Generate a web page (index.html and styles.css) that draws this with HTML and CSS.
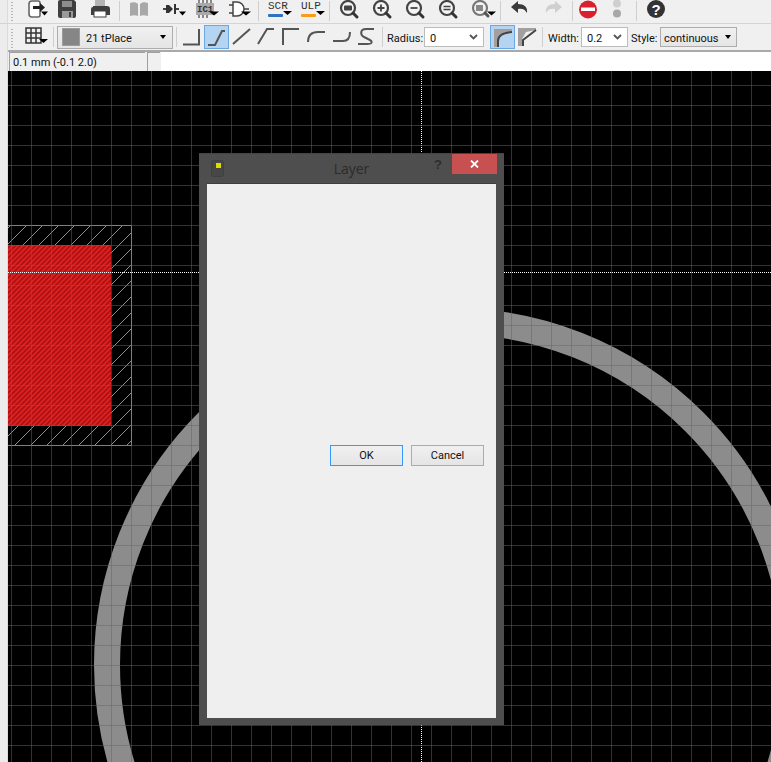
FILE: index.html
```html
<!DOCTYPE html>
<html lang="en">
<head>
  <meta charset="UTF-8">
  <title>Layer</title>
  <link rel="stylesheet" href="styles.css">
</head>
<body>
  <div class="toolbar row1">
    <span class="edge"></span>
    <span class="grip"></span>
    <svg class="tool" width="41" height="23" viewBox="13 0 41 23">
      <path d="M32 1h6a2 2 0 0 1 2 2v12a2 2 0 0 1-2 2h-6a3 3 0 0 1-3-3V4a3 3 0 0 1 3-3z" fill="#fff" stroke="#666" stroke-width="1.6"/>
      <path d="M33 6h7V3l5 4.5-5 4.5V9h-7z" fill="#222"/>
      <path d="M41 11.5h7l-3.5 4z" fill="#000"/>
    </svg>
    <svg class="tool" width="30" height="23" viewBox="54 0 30 23">
      <path d="M60 0h14l2 2v14a2 2 0 0 1-2 2H60a2 2 0 0 1-2-2V2a2 2 0 0 1 2-2z" fill="#3f3f3f"/>
      <rect x="62" y="1" width="10" height="6" fill="#8e8e8e"/>
      <rect x="62" y="11" width="11" height="7" fill="#9a9a9a"/>
      <rect x="69" y="12" width="2" height="5" fill="#3f3f3f"/>
    </svg>
    <svg class="tool" width="35" height="23" viewBox="84 0 35 23">
      <path d="M95 0h10v6H95z" fill="#b4b4b4"/>
      <path d="M93 6h14a3 3 0 0 1 3 3v6H91V9a2 2 0 0 1 2-2z" fill="#3f3f3f"/>
      <rect x="94" y="11" width="12" height="6" fill="#fff" stroke="#3f3f3f"/>
    </svg>
    <span class="sep"></span>
    <svg class="tool" width="35" height="23" viewBox="120 0 35 23">
      <path d="M130 3c3-1 6-1 8 1v12c-2-1-5-1-8 0zM148 3c-3-1-6-1-8 1v12c2-1 5-1 8 0z" fill="#a8a8a8"/>
    </svg>
    <svg class="tool" width="37" height="23" viewBox="155 0 37 23">
      <path d="M163 9h3M176 9h3" stroke="#444" stroke-width="2"/>
      <path d="M166 5h3l4 4-4 4h-3z M174 4h2v10h-2z" fill="#333"/>
      <path d="M179 11.5h7l-3.5 4z" fill="#000"/>
    </svg>
    <svg class="tool" width="32" height="23" viewBox="192 0 32 23">
      <path d="M199 0v3M203 0v3M207 0v3M211 0v3M199 15v3M203 15v3M207 15v3" stroke="#888" stroke-width="2"/>
      <rect x="196" y="3" width="18" height="12" fill="#a9a9a9"/>
      <text x="197" y="12" class="chip">IC1</text>
      <path d="M209 11.5h10l-5 4z" fill="#000"/>
    </svg>
    <svg class="tool" width="34" height="23" viewBox="224 0 34 23">
      <path d="M233 2h4a7 7 0 0 1 0 14h-4z" fill="#fff" stroke="#444" stroke-width="1.5"/>
      <path d="M229 5h4M229 13h4M244 9h5" stroke="#444" stroke-width="1.5"/>
      <path d="M241 11.5h10l-5 4z" fill="#000"/>
    </svg>
    <span class="sep"></span>
    <svg class="tool" width="37" height="23" viewBox="259 0 37 23">
      <text x="268" y="9" class="script">SCR</text>
      <rect x="268" y="14" width="15" height="3" rx="1" fill="#2c74bd"/>
      <path d="M283 11h9l-4.500 4z" fill="#000"/>
    </svg>
    <svg class="tool" width="33" height="23" viewBox="296 0 33 23">
      <text x="301" y="9" class="script">ULP</text>
      <rect x="301" y="14" width="15" height="3" rx="1" fill="#f99b1c"/>
      <path d="M316 11h9l-4.500 4z" fill="#000"/>
    </svg>
    <span class="sep"></span>
    <svg class="tool" width="36" height="23" viewBox="330 0 36 23">
      <circle cx="348" cy="8" r="7" class="lens"/>
      <path d="M353 13l4 4" class="handle"/>
      <rect x="344" y="5.500" width="8" height="5" rx="1" fill="#444"/>
    </svg>
    <svg class="tool" width="33" height="23" viewBox="366 0 33 23">
      <circle cx="381" cy="8" r="7" class="lens"/>
      <path d="M386 13l4 4" class="handle"/>
      <path d="M381 4.500v7M377.500 8h7" stroke="#444" stroke-width="1.800"/>
    </svg>
    <svg class="tool" width="33" height="23" viewBox="399 0 33 23">
      <circle cx="414" cy="8" r="7" class="lens"/>
      <path d="M419 13l4 4" class="handle"/>
      <path d="M410.500 8h7" stroke="#444" stroke-width="1.800"/>
    </svg>
    <svg class="tool" width="33" height="23" viewBox="432 0 33 23">
      <circle cx="447" cy="8" r="7" class="lens"/>
      <path d="M452 13l4 4" class="handle"/>
      <path d="M443.500 6.500h7M443.500 9.500h7" stroke="#444" stroke-width="1.500"/>
    </svg>
    <svg class="tool" width="35" height="23" viewBox="465 0 35 23">
      <circle cx="480" cy="8" r="7" class="lens soft"/>
      <path d="M485 13l3 3" class="handle soft"/>
      <rect x="476" y="5" width="7" height="6" fill="#888"/>
      <path d="M487 11.500h9l-4.500 4z" fill="#000"/>
    </svg>
    <span class="sep"></span>
    <svg class="tool" width="36" height="23" viewBox="501 0 36 23">
      <path d="M518 4V1l-7 6 7 6V9c4-1 7 0 9 4 1-6-3-9-9-9z" fill="#3a3a3a"/>
    </svg>
    <svg class="tool" width="35" height="23" viewBox="537 0 35 23">
      <path d="M555 4V1l7 6-7 6V9c-4-1-7 0-9 4-1-6 3-9 9-9z" fill="#cfcfcf"/>
    </svg>
    <span class="sep"></span>
    <svg class="tool" width="29" height="23" viewBox="573 0 29 23">
      <circle cx="588" cy="9.500" r="9" fill="#d9202f"/>
      <rect x="581" y="7.500" width="14" height="3.500" fill="#fff"/>
    </svg>
    <svg class="tool" width="34" height="23" viewBox="602 0 34 23">
      <circle cx="617" cy="3.500" r="4" fill="#cfcfcf"/>
      <circle cx="617" cy="13.500" r="4" fill="#a8a8a8"/>
    </svg>
    <span class="sep"></span>
    <svg class="tool" width="38" height="23" viewBox="637 0 38 23">
      <circle cx="656" cy="9" r="9" fill="#333"/>
      <text x="656" y="14.500" class="help">?</text>
    </svg>
  </div>

  <div class="toolbar row2">
    <span class="edge"></span>
    <span class="grip"></span>
    <svg class="tool" width="40" height="24" viewBox="13 26 40 24">
      <path d="M26 29h15v15H26zM26 34h15M26 39h15M31 29v15M36 29v15" fill="none" stroke="#333" stroke-width="1.500"/>
      <path d="M39 40h9l-4.500 4z" fill="#000"/>
    </svg>
    <span class="sep"></span>
    <div class="combo layer">
      <span class="swatch"></span>
      <span class="combo-text">21 tPlace</span>
      <span class="arrow"></span>
    </div>
    <span class="sep wide"></span>
    <svg class="tool" width="27" height="24" viewBox="177 26 27 24"><path d="M183 45.500H199V30" class="wire"/></svg>
    <svg class="tool on" width="25" height="24" viewBox="204 26 25 24"><path d="M208 46H215L222 32H225" class="wire"/></svg>
    <svg class="tool" width="25" height="24" viewBox="229 26 25 24"><path d="M233 45L250 30" class="wire"/></svg>
    <svg class="tool" width="25" height="24" viewBox="254 26 25 24"><path d="M258 45L267 30H274" class="wire"/></svg>
    <svg class="tool" width="25" height="24" viewBox="279 26 25 24"><path d="M283 46V30H299" class="wire"/></svg>
    <svg class="tool" width="25" height="24" viewBox="304 26 25 24"><path d="M308 43Q308 33 318 33H325" class="wire"/></svg>
    <svg class="tool" width="25" height="24" viewBox="329 26 25 24"><path d="M333 42H343Q350 42 350 33" class="wire"/></svg>
    <svg class="tool" width="28" height="24" viewBox="354 26 28 24"><path d="M374 30H366C360 30 360 36 364 38L368 40C373 42 373 45 367 45H358" class="wire"/></svg>
    <span class="sep"></span>
    <span class="label radius">Radius:</span>
    <div class="combo field radius-box">
      <span class="combo-text">0</span>
      <svg class="chevron" width="9" height="6" viewBox="0 0 9 6"><path d="M1 1l3.500 3.500L8 1" fill="none" stroke="#555" stroke-width="1.800"/></svg>
    </div>
    <svg class="tool on toggle" width="25" height="24" viewBox="490 26 25 24">
      <path d="M494 30H512V33Q497 33 497 48H494z" fill="#a39f9f"/>
      <path d="M498 48V42Q498 34 512 33" fill="none" stroke="#444" stroke-width="2"/>
    </svg>
    <svg class="tool" width="27" height="24" viewBox="515 26 27 24">
      <path d="M518 29H536V31L526 33L522 40V47H518z" fill="#a39f9f"/>
      <path d="M523 47V41L536 31" fill="none" stroke="#444" stroke-width="2"/>
    </svg>
    <span class="sep"></span>
    <span class="label width">Width:</span>
    <div class="combo field width-box">
      <span class="combo-text">0.2</span>
      <svg class="chevron" width="9" height="6" viewBox="0 0 9 6"><path d="M1 1l3.500 3.500L8 1" fill="none" stroke="#555" stroke-width="1.800"/></svg>
    </div>
    <span class="label style">Style:</span>
    <div class="combo style-box">
      <span class="combo-text">continuous</span>
      <span class="arrow"></span>
    </div>
  </div>

  <div class="status">
    <span class="edge"></span>
    <span class="cell coords">0.1 mm (-0.1 2.0)</span>
    <span class="cell blank"></span>
    <span class="entry"></span>
  </div>

  <div class="work">
    <span class="edge"></span>
    <div class="canvas">
      <svg width="763" height="691" viewBox="8 71 763 691">
        <defs>
          <pattern id="hatch" width="16" height="16" patternUnits="userSpaceOnUse">
            <path d="M0 12L12 0M12 16L16 12" stroke="#8e8e8e" stroke-width="1" shape-rendering="crispEdges"/>
          </pattern>
          <pattern id="fill" width="5" height="5" patternUnits="userSpaceOnUse">
            <rect width="5" height="5" fill="#e02020"/>
            <path d="M-1 2L2 -1M-1 7L7 -1M4 7L7 4" stroke="#a81212" stroke-width="1.600"/>
          </pattern>
        </defs>
        <rect x="8" y="71" width="763" height="691" fill="#000"/>
        <circle cx="451" cy="665" r="344" fill="none" stroke="#8c8c8c" stroke-width="26"/>
        <rect x="8" y="225" width="123" height="220" fill="url(#hatch)"/>
        <path d="M8 225.500H131.500V445.500H8" fill="none" stroke="#9a9a9a" stroke-width="1"/>
        <rect x="8" y="245" width="103" height="181" fill="url(#fill)"/>
        <path d="M8 272.500H771M421.500 71V762" stroke="#fff" stroke-width="1" stroke-dasharray="1 1" shape-rendering="crispEdges"/>
      </svg>
      <div class="grid"></div>
      <div class="dialog">
        <div class="titlebar">
          <svg class="appicon" width="14" height="17" viewBox="0 0 14 17">
            <rect x="0.500" y="0.500" width="12" height="16" rx="2" fill="#474747" stroke="#404040"/>
            <rect x="5" y="3" width="5" height="5" fill="#dcdc00"/>
          </svg>
          <span class="title">Layer</span>
          <span class="whatsthis">?</span>
          <span class="close">
            <svg width="9" height="8" viewBox="0 0 9 8"><path d="M1 .5l7 7M8 .5l-7 7" stroke="#fff" stroke-width="1.800"/></svg>
          </span>
        </div>
        <div class="client">
          <button class="btn default" type="button">OK</button>
          <button class="btn" type="button">Cancel</button>
        </div>
      </div>
    </div>
  </div>
</body>
</html>
```

FILE: styles.css
```css
* {
  box-sizing: border-box;
}
html, body {
  margin: 0;
  padding: 0;
  height: 100%;
  overflow: hidden;
}
body {
  width: 771px;
  height: 762px;
  background: #f0f0f0;
  font-family: Roboto, "Open Sans", sans-serif;
  font-size: 11px;
  color: #111;
}
.edge {
  flex: none;
  width: 8px;
  align-self: stretch;
  background: #ececec;
  border-right: 1px solid #dcdcdc;
}

/* toolbars */
.toolbar {
  display: flex;
  background: #f0f0f0;
}
.row1 {
  height: 24px;
  border-bottom: 1px solid #d4d4d4;
  align-items: flex-start;
}
.row2 {
  height: 28px;
  border-bottom: 2px solid #a9a9a9;
  align-items: center;
}
.row2 .edge {
  margin-bottom: -2px;
}
.grip {
  flex: none;
  width: 2px;
  height: 19px;
  margin: 2px 0 0 3px;
  background: repeating-linear-gradient(to bottom, #b5b5b5 0 1px, transparent 1px 3px);
}
.tool {
  flex: none;
  display: block;
}
.tool.on {
  background: #b5d4f1;
  outline: 1px solid #69a8e3;
  outline-offset: -1px;
}
.toggle {
  margin-left: 6px;
}
.sep {
  flex: none;
  width: 1px;
  height: 20px;
  margin-top: 1px;
  background: #cfcfcf;
}
.row2 .sep {
  margin-top: 0;
}
.row2 .sep:not(.wide) + .combo {
  margin-left: 3px;
}
.sep.wide {
  margin-left: 3px;
}
.chip {
  font-family: "Liberation Mono", monospace;
  font-size: 9px;
  font-weight: 700;
  fill: #333;
}
.script {
  font-family: "Liberation Mono", monospace;
  font-size: 11px;
  fill: #333;
}
.help {
  font-family: "Liberation Sans", sans-serif;
  font-size: 15px;
  font-weight: 700;
  fill: #fff;
  text-anchor: middle;
}
.lens {
  fill: #f4f4f4;
  stroke: #444;
  stroke-width: 2.2;
}
.handle {
  fill: none;
  stroke: #333;
  stroke-width: 3;
  stroke-linecap: round;
}
.lens.soft {
  stroke: #777;
}
.handle.soft {
  stroke: #555;
}
.wire {
  fill: none;
  stroke: #555;
  stroke-width: 2;
}

/* combos */
.combo {
  flex: none;
  display: flex;
  align-items: center;
  border: 1px solid #adadad;
  background: linear-gradient(#f0f0f0, #e5e5e5);
}
.combo-text {
  padding-top: 2px;
  white-space: nowrap;
  color: #111;
}
.arrow {
  margin-left: auto;
  width: 0;
  height: 0;
  border-left: 3.5px solid transparent;
  border-right: 3.5px solid transparent;
  border-top: 4px solid #000;
}
.layer {
  width: 116px;
  height: 23px;
  padding: 0 6px 0 4px;
}
.swatch {
  width: 18px;
  height: 18px;
  margin-right: 6px;
  background: #868686;
  border: 1px solid #9c9c9c;
}
.field {
  height: 20px;
  background: #fff;
  border-color: #bcbcbc;
  padding: 0 5px;
}
.chevron {
  margin-left: auto;
}
.label {
  flex: none;
  padding-top: 2px;
  text-align: left;
  white-space: nowrap;
  color: #111;
}
.label.radius {
  width: 37px;
  margin-left: 4px;
}
.label.width {
  width: 33px;
  margin-left: 5px;
}
.label.style {
  width: 29px;
  margin-left: 3px;
}
.radius-box {
  width: 60px;
}
.width-box {
  width: 47px;
}
.style-box {
  width: 77px;
  height: 20px;
  padding: 0 5px 0 3px;
}

/* status line */
.status {
  display: flex;
  height: 19px;
  background: #f0f0f0;
}
.cell {
  flex: none;
  height: 19px;
  border-top: 1px solid #a0a0a0;
  border-left: 1px solid #a0a0a0;
  background: #f0f0f0;
}
.coords {
  width: 136px;
  margin: 0 2px 0 1px;
  padding-left: 3px;
  line-height: 20px;
  white-space: nowrap;
}
.blank {
  width: 13px;
  margin-right: 1px;
}
.entry {
  flex: 1;
  background: #fff;
}

/* drawing area */
.work {
  display: flex;
  height: 691px;
}
.canvas {
  position: relative;
  flex: 1;
  overflow: hidden;
}
.canvas > svg {
  display: block;
}
.grid {
  position: absolute;
  inset: 0;
  background-image:
    linear-gradient(to right, rgba(100,100,100,.5) 1px, transparent 1px),
    linear-gradient(to bottom, rgba(100,100,100,.5) 1px, transparent 1px);
  background-size: 20px 20px;
  background-position: 3px 14px;
}
.dialog {
  position: absolute;
  left: 191px;
  top: 82px;
  width: 305px;
  height: 572px;
  display: flex;
  flex-direction: column;
  padding: 1px 8px 7px;
  background: #4e4e4e;
  border-top: 1px solid #444;
}
.titlebar {
  position: relative;
  height: 28px;
  flex: none;
}
.appicon {
  position: absolute;
  left: 4px;
  top: 5px;
}
.title {
  position: absolute;
  left: 0;
  right: 0;
  top: 4px;
  text-align: center;
  font-family: "Open Sans", sans-serif;
  font-size: 14px;
  line-height: 20px;
  color: #2b2b2b;
}
.whatsthis {
  position: absolute;
  left: 227px;
  top: 1px;
  font-family: "Liberation Sans", sans-serif;
  font-size: 13px;
  font-weight: 700;
  line-height: 18px;
  color: #2d2d2d;
}
.close {
  position: absolute;
  right: -1px;
  top: -1px;
  width: 45px;
  height: 20px;
  display: flex;
  align-items: center;
  justify-content: center;
  background: #c75050;
}
.client {
  flex: 1;
  display: flex;
  justify-content: flex-end;
  align-items: center;
  gap: 8px;
  padding: 9px 12px 0 0;
  background: #efefef;
  border-top: 1px solid #3e3e3e;
}
.btn {
  width: 73px;
  height: 21px;
  padding: 0;
  font-family: inherit;
  font-size: 11px;
  color: #111;
  background: linear-gradient(#f0f0f0, #e5e5e5);
  border: 1px solid #acacac;
  border-radius: 0;
}
.btn.default {
  border-color: #3399ff;
}
```
